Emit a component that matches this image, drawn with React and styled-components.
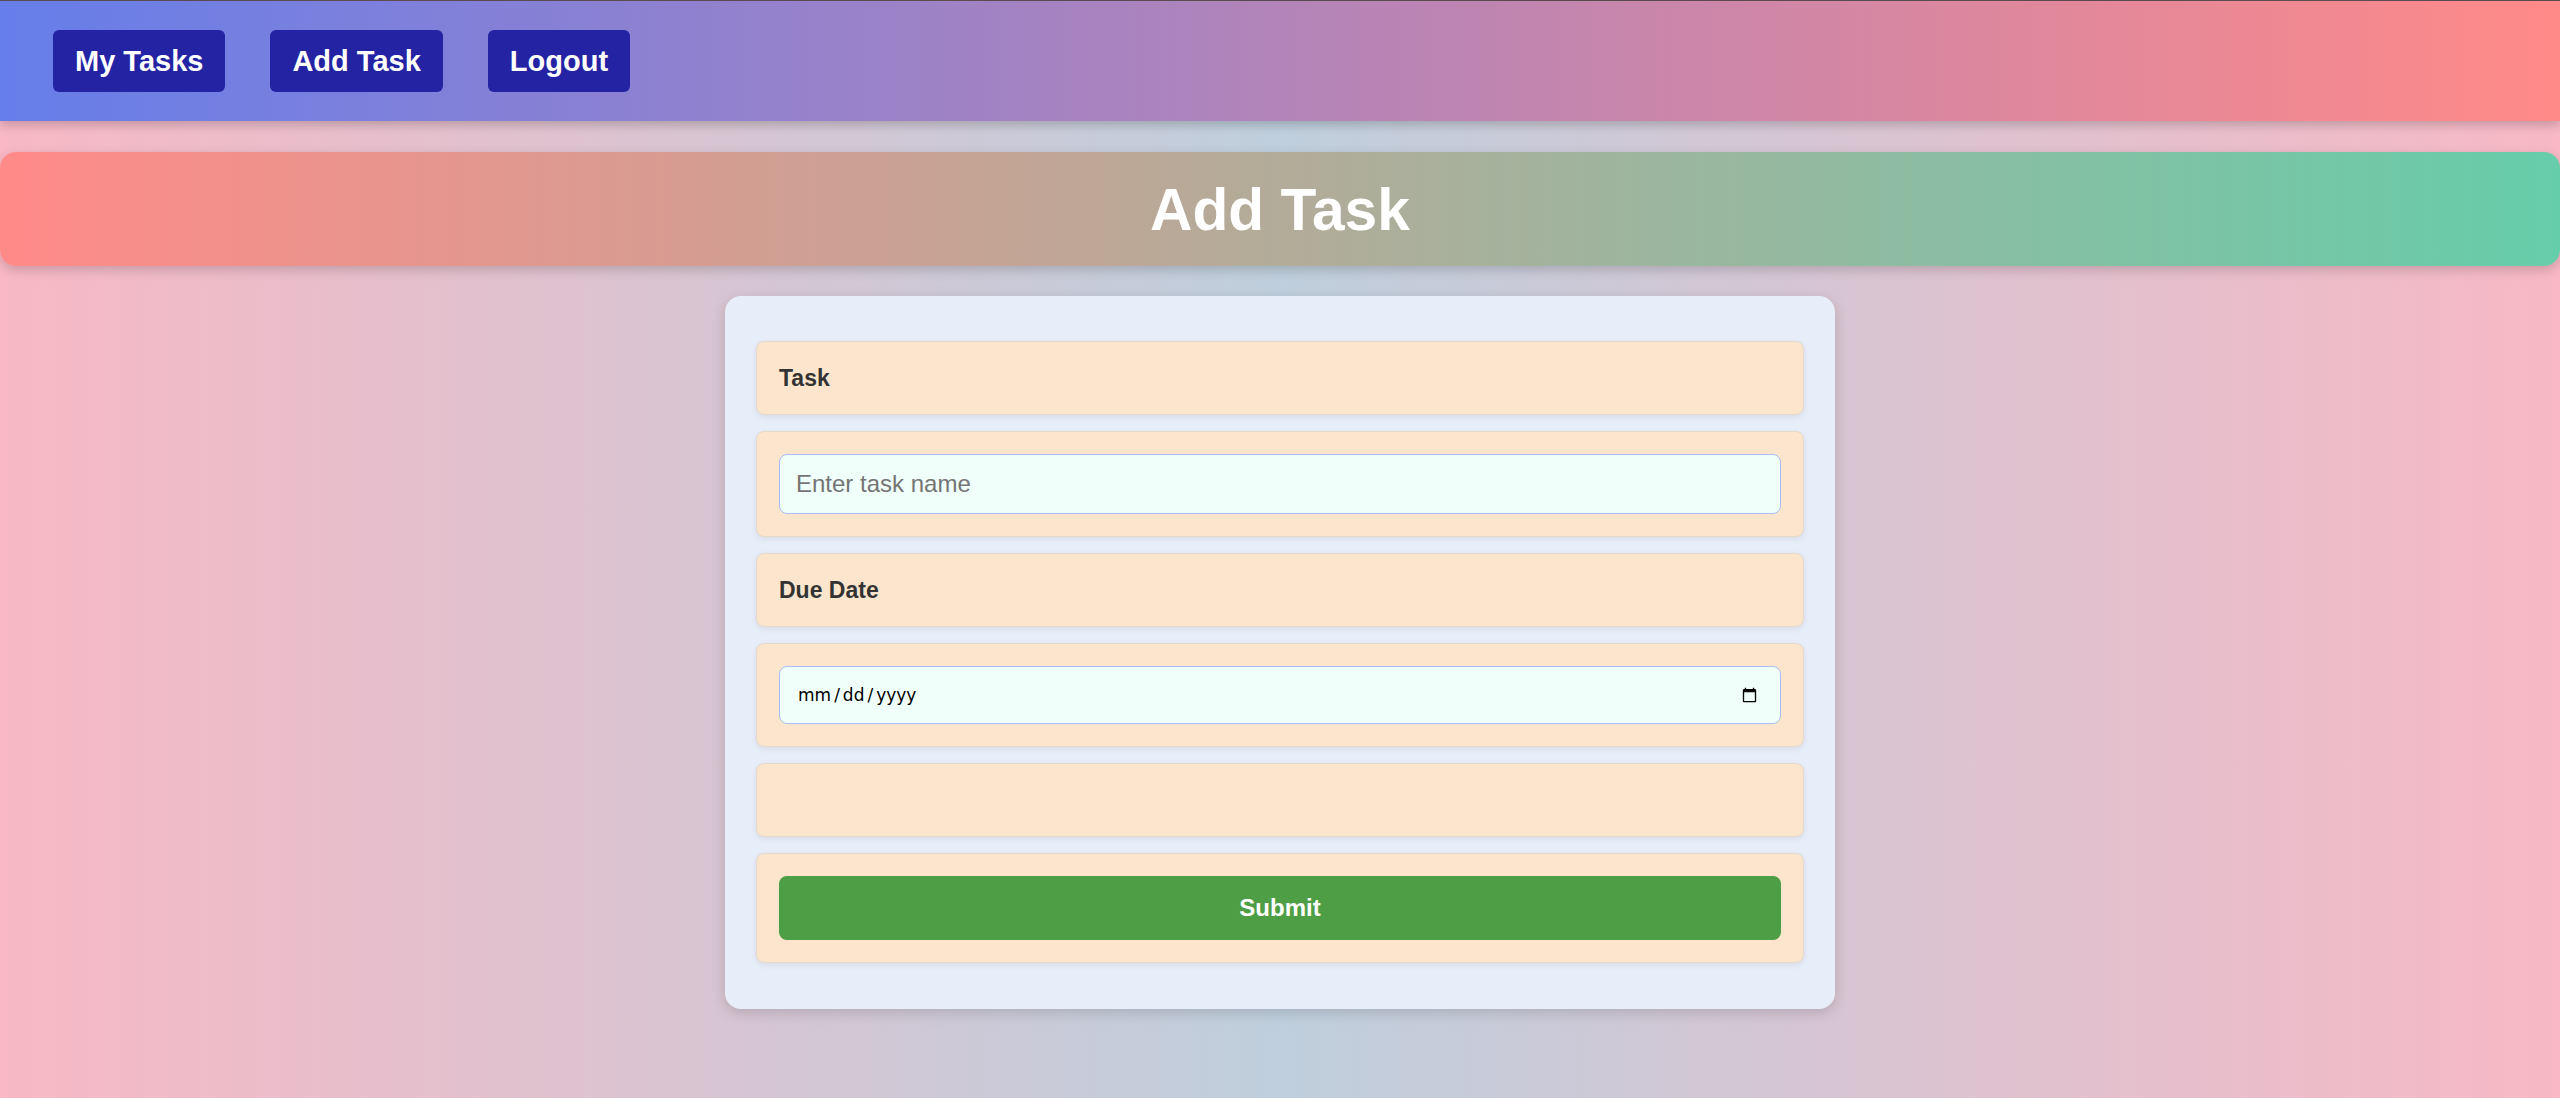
import React, { useState } from 'react';
import styled, { createGlobalStyle } from 'styled-components';

const GlobalStyle = createGlobalStyle`
  html, body {
    margin: 0;
    padding: 0;
  }
  body {
    min-height: 1098px;
    font-family: "Liberation Sans", Arial, sans-serif;
    background: linear-gradient(to right, #f8b8c5 0%, #bfcfdd 50%, #f8b8c5 100%);
  }
  * {
    box-sizing: border-box;
  }
`;

const Page = styled.div`
  min-height: 1098px;
  display: flex;
  flex-direction: column;
`;

const Nav = styled.nav`
  height: 121px;
  display: flex;
  align-items: center;
  gap: 45px;
  padding-left: 53px;
  border-top: 1px solid #5a4c4e;
  background: linear-gradient(to right, #667eea, #ff8a88);
  box-shadow: 0 4px 10px rgba(0, 0, 0, 0.2);
`;

const NavButton = styled.button`
  height: 62px;
  padding: 0 22px;
  border: none;
  border-radius: 6px;
  background: #2323a4;
  color: #fff;
  font-family: "Liberation Sans", Arial, sans-serif;
  font-size: 29px;
  font-weight: bold;
  cursor: pointer;
`;

const Banner = styled.header`
  margin-top: 31px;
  height: 114px;
  display: flex;
  align-items: center;
  justify-content: center;
  border-radius: 16px;
  background: linear-gradient(to right, #ff8a88, #66cdaa);
  box-shadow: 0 4px 12px rgba(0, 0, 0, 0.18);
`;

const Title = styled.h1`
  margin: 0;
  color: #fff;
  font-size: 58.7px;
  font-weight: bold;
`;

const Card = styled.form`
  align-self: center;
  width: 1110px;
  margin-top: 30px;
  padding: 45px 31px 46px;
  display: flex;
  flex-direction: column;
  gap: 16px;
  border-radius: 16px;
  background: #e8eef9;
  box-shadow: 0 4px 14px rgba(0, 0, 0, 0.15);
`;

const Row = styled.div`
  padding: 22px;
  border: 1px solid #e6d8ca;
  border-radius: 8px;
  background: #fbe6cd;
  box-shadow: 0 2px 6px rgba(0, 0, 0, 0.08);
`;

const Label = styled.label`
  display: block;
  min-height: 28px;
  line-height: 28px;
  color: #333;
  font-size: 23px;
  font-weight: bold;
`;

const TextInput = styled.input`
  display: block;
  width: 100%;
  height: 60px;
  padding: 0 16px;
  border: 1px solid #a9bcf3;
  border-radius: 8px;
  background: #f0fffa;
  color: #333;
  font-family: "Liberation Sans", Arial, sans-serif;
  font-size: 24px;
  outline: none;

  &::placeholder {
    color: #757575;
  }
`;

const DateInput = styled(TextInput)`
  height: 58px;
  padding: 0 20px 0 17px;
  font-family: "DejaVu Sans", sans-serif;
  font-size: 17px;
  color: #000;

  &::-webkit-datetime-edit-text {
    padding: 0 2px;
  }
`;

const Submit = styled.button`
  display: block;
  width: 100%;
  height: 64px;
  border: none;
  border-radius: 8px;
  background: #4e9e45;
  color: #fff;
  font-family: "Liberation Sans", Arial, sans-serif;
  font-size: 24px;
  font-weight: bold;
  cursor: pointer;
`;

export default function App() {
  const [task, setTask] = useState('');
  const [date, setDate] = useState('');

  return (
    <Page>
      <GlobalStyle />
      <Nav>
        <NavButton>My Tasks</NavButton>
        <NavButton>Add Task</NavButton>
        <NavButton>Logout</NavButton>
      </Nav>
      <Banner>
        <Title>Add Task</Title>
      </Banner>
      <Card onSubmit={e => e.preventDefault()}>
        <Row>
          <Label htmlFor="task">Task</Label>
        </Row>
        <Row>
          <TextInput
            id="task"
            type="text"
            placeholder="Enter task name"
            value={task}
            onChange={e => setTask(e.target.value)}
          />
        </Row>
        <Row>
          <Label htmlFor="due">Due Date</Label>
        </Row>
        <Row>
          <DateInput
            id="due"
            type="date"
            value={date}
            onChange={e => setDate(e.target.value)}
          />
        </Row>
        <Row>
          <Label />
        </Row>
        <Row>
          <Submit type="submit">Submit</Submit>
        </Row>
      </Card>
    </Page>
  );
}
